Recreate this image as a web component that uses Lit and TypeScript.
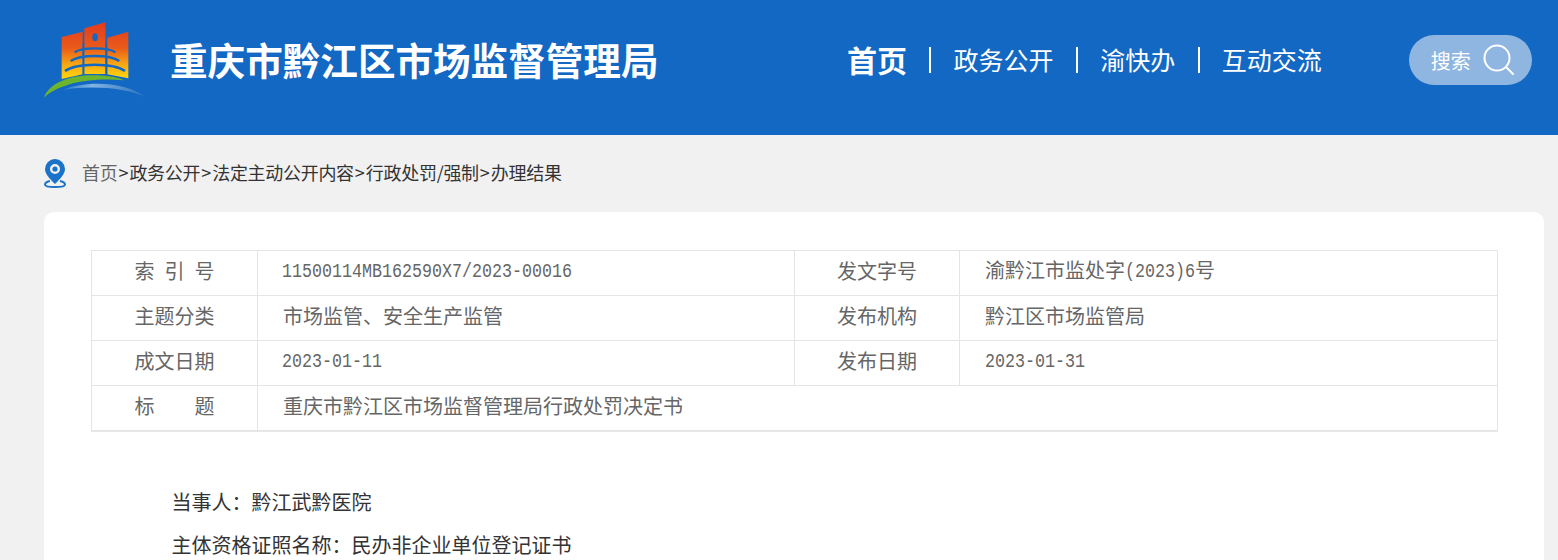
import { LitElement, html, css } from "lit";
import { customElement } from "lit/decorators.js";

@customElement("app-root")
export class AppRoot extends LitElement {
  static styles = css`
    :host { display: block; height: 560px; overflow: hidden; background: #f1f1f1;
      font-family: "Noto Sans CJK SC", "Liberation Sans", sans-serif; }
    .header { height: 135px; background: #1368c4; display: flex; align-items: center; color: #fff; }
    .logo { width: 130px; height: 100px; margin-left: 30px; margin-top: -15px; flex: none; display: block; }
    .title { margin: -17px 0 0 10px; font-size: 37.6px; line-height: 50px; font-weight: 700; width: 488px; white-space: nowrap; }
    .nav { display: flex; align-items: center; margin: -17px 0 0 189px; gap: 22.3px; font-size: 25px; line-height: 38px; white-space: nowrap; }
    .nav .on { font-size: 30px; font-weight: 700; }
    .sep { width: 2px; height: 26px; background: #fff; margin-top: 2px; }
    .search { margin: -15px 0 0 87px; width: 123px; height: 50px; border-radius: 25px; background: #8fb6e0; display: flex; align-items: center;
      box-sizing: border-box; padding-left: 22px; font-size: 20px; }
    .search svg { margin-left: 9px; display: block; }
    .crumb { display: flex; align-items: center; height: 77px; padding: 0 0 3px 44px; box-sizing: border-box; font-size: 18px; letter-spacing: -0.3px; color: #333; white-space: nowrap; }
    .crumb svg { margin: 3px 16px 0 0; display: block; }
    .crumb .home { color: #666; }
    .gt { display: inline-block; width: 12px; text-align: center; letter-spacing: 0; }
    .card { margin: 0 14px 0 44px; background: #fff; border-radius: 10px 10px 0 0; padding: 38px 46px 0 47px; height: 400px; box-sizing: border-box; }
    table { width: 1406px; border-collapse: collapse; table-layout: fixed; font-size: 20px; color: #666; box-shadow: 0 1px 0 #e8e8e8; }
    td { border: 1px solid #e5e5e5; height: 45px; padding: 0 0 4px; box-sizing: border-box; line-height: 30px; }
    td.k { text-align: center; }
    td.v { padding-left: 25px; }
    .m { display: inline-block; font-family: "Liberation Mono", monospace; font-size: 20px; transform: translateY(-1px) scaleX(.8333); transform-origin: left center; white-space: nowrap; color: #666; }
    .m.start { margin-left: -1px; }
    .m.inl { margin-right: -14px; }
    .split { display: inline-flex; width: 80px; justify-content: space-between; vertical-align: top; }
    .body { margin: 49px 0 0 80.5px; font-size: 20px; color: #333; line-height: 43px; }
    .body p { margin: 0; white-space: nowrap; }
  `;

  render() {
    const gt = html`<span class="gt">&gt;</span>`;
    return html`
      <div class="header">
        <svg class="logo" viewBox="0 0 390 300">
          <defs>
            <linearGradient id="g" x1="0" y1="40" x2="0" y2="205" gradientUnits="userSpaceOnUse">
              <stop offset="0" stop-color="#e33c1d"></stop>
              <stop offset=".45" stop-color="#ea5b1b"></stop>
              <stop offset=".75" stop-color="#f8a813"></stop>
              <stop offset="1" stop-color="#ffd60b"></stop>
            </linearGradient>
            <linearGradient id="b" x1="100" y1="0" x2="345" y2="0" gradientUnits="userSpaceOnUse">
              <stop offset="0" stop-color="#2f7ccb"></stop>
              <stop offset=".35" stop-color="#7fb3e3"></stop>
              <stop offset=".75" stop-color="#4d8bcb"></stop>
              <stop offset="1" stop-color="#2a74c6"></stop>
            </linearGradient>
          </defs>
          <path fill="url(#g)" d="M95 81 158 65V193L95 207Z"></path>
          <path fill="url(#g)" d="M163 55 226 37V192H163Z"></path>
          <path fill="url(#g)" d="M232 83 295 65V205L232 193Z"></path>
          <ellipse cx="195" cy="82" rx="8" ry="12" fill="#1368c4"></ellipse>
          <g fill="none" stroke="#1368c4">
            <path stroke-width="7" d="M134 127C155 111 235 111 256 127"></path>
            <path stroke-width="7" d="M122 153C150 133 240 133 268 153"></path>
            <path stroke-width="8" d="M105 183C140 158 250 158 285 183"></path>
          </g>
          <path fill="none" stroke="#1368c4" stroke-width="5" d="M160 100V200M229 100V200"></path>
          <path fill="#6cb52d" d="M42 263C58 212 140 192 200 196 235 197 265 202 282 211 230 206 165 208 115 224 85 233 60 245 42 263Z"></path>
          <path fill="url(#b)" d="M100 240C160 212 285 212 347 262 290 232 175 226 100 240Z"></path>
        </svg>
        <div class="title">重庆市黔江区市场监督管理局</div>
        <div class="nav">
          <span class="on">首页</span><i class="sep"></i>
          <span>政务公开</span><i class="sep"></i>
          <span>渝快办</span><i class="sep"></i>
          <span>互动交流</span>
        </div>
        <div class="search">
          <span>搜索</span>
          <svg width="34" height="34" viewBox="0 0 34 34" fill="none" stroke="#fff" stroke-width="2">
            <circle cx="17" cy="15" r="12.500"></circle>
            <path d="M26 24 33 31" stroke-linecap="round"></path>
          </svg>
        </div>
      </div>
      <div class="crumb">
        <svg width="22" height="29" viewBox="0 0 22 29">
          <path fill="#1a73c8" fill-rule="evenodd" d="M11 0a10 10 0 0 1 10 10c0 5-5 10-10 15C6 20 1 15 1 10A10 10 0 0 1 11 0Zm0 5a5 5 0 1 0 0 10 5 5 0 0 0 0-10Z"></path>
          <circle cx="11" cy="10" r="2.600" fill="#1a73c8"></circle>
          <path fill="none" stroke="#1a73c8" stroke-width="2" d="M6 22C2 23 1 24.500 1 25.500 1 27.500 5 28 11 28s10-.5 10-2.500C21 24.500 20 23 16 22"></path>
        </svg>
        <span><span class="home">首页</span>${gt}政务公开${gt}法定主动公开内容${gt}行政处罚/强制${gt}办理结果</span>
      </div>
      <div class="card">
        <table>
          <colgroup><col style="width:166px" /><col style="width:537px" /><col style="width:165px" /><col style="width:538px" /></colgroup>
          <tr>
            <td class="k"><span class="split"><span>索</span><span>引</span><span>号</span></span></td>
            <td class="v"><span class="m start">11500114MB162590X7/2023-00016</span></td>
            <td class="k">发文字号</td>
            <td class="v">渝黔江市监处字<span class="m inl">(2023)6</span>号</td>
          </tr>
          <tr>
            <td class="k">主题分类</td><td class="v">市场监管、安全生产监管</td>
            <td class="k">发布机构</td><td class="v">黔江区市场监管局</td>
          </tr>
          <tr>
            <td class="k">成文日期</td><td class="v"><span class="m start">2023-01-11</span></td>
            <td class="k">发布日期</td><td class="v"><span class="m">2023-01-31</span></td>
          </tr>
          <tr>
            <td class="k"><span class="split"><span>标</span><span>题</span></span></td>
            <td class="v" colspan="3">重庆市黔江区市场监督管理局行政处罚决定书</td>
          </tr>
        </table>
        <div class="body">
          <p>当事人：黔江武黔医院</p>
          <p>主体资格证照名称：民办非企业单位登记证书</p>
        </div>
      </div>
    `;
  }
}
